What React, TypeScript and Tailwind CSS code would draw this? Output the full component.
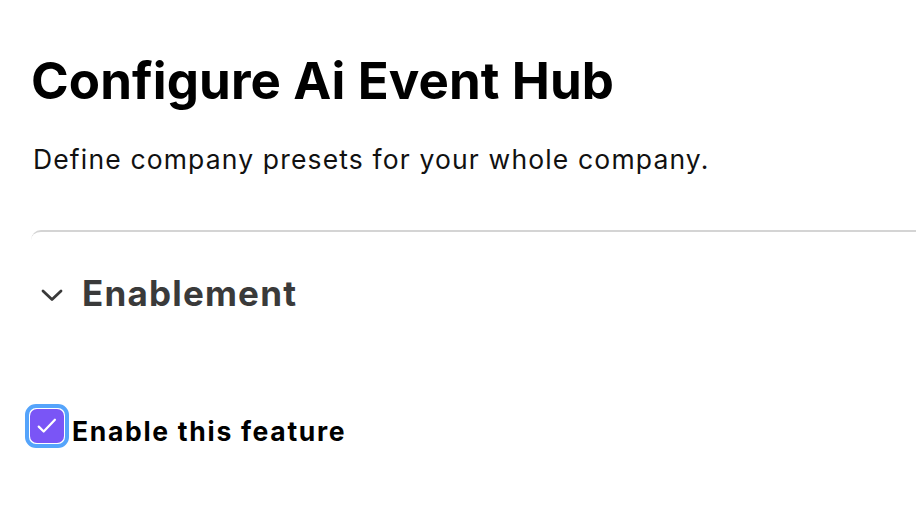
import React from "react";

export default function App() {
  return (
    <div className="w-[916px] h-[515px] bg-white overflow-hidden" style={{ fontFamily: "Inter, 'Noto Sans', sans-serif" }}>
      <div className="pl-[31px] pt-[50px]">
        <h1 className="text-[51px] leading-[62px] font-bold text-black tracking-[0.1px]">Configure Ai Event Hub</h1>
        <p className="mt-[29px] ml-[2px] text-[26.5px] leading-[36px] text-[#111] tracking-[1.15px]">Define company presets for your whole company.</p>
        <div className="mt-[53px] border-t-2 border-[#d4d4d4] rounded-tl-[10px] pt-[39px]">
          <div className="flex items-center gap-[18px] pl-[9px]">
            <svg width="24" height="24" viewBox="0 0 24 24" fill="none" stroke="#3a3a3a" strokeWidth="2.8" strokeLinecap="round" strokeLinejoin="round">
              <path d="M3 10l9 8.5 9-8.5" />
            </svg>
            <span className="text-[35px] leading-[44px] font-bold text-[#3a3a3a] tracking-[1.2px]">Enablement</span>
          </div>
          <div className="mt-[89px] -ml-[6px] flex items-start gap-[3px]">
            <div className="w-[44px] h-[44px] rounded-[11px] border-4 border-[#55a4fb] p-[1px] bg-white">
              <div className="w-full h-full rounded-[7px] bg-[#7a55f6] flex items-center justify-center">
                <svg width="26" height="26" viewBox="0 0 22 22" fill="none" stroke="white" strokeWidth="1.9" strokeLinecap="round" strokeLinejoin="round">
                  <path d="M4 11.5l4.2 4.2 9.5-10" />
                </svg>
              </div>
            </div>
            <span className="mt-[9px] text-[26.5px] leading-[36px] font-bold text-black tracking-[1.7px]">Enable this feature</span>
          </div>
        </div>
      </div>
    </div>
  );
}
